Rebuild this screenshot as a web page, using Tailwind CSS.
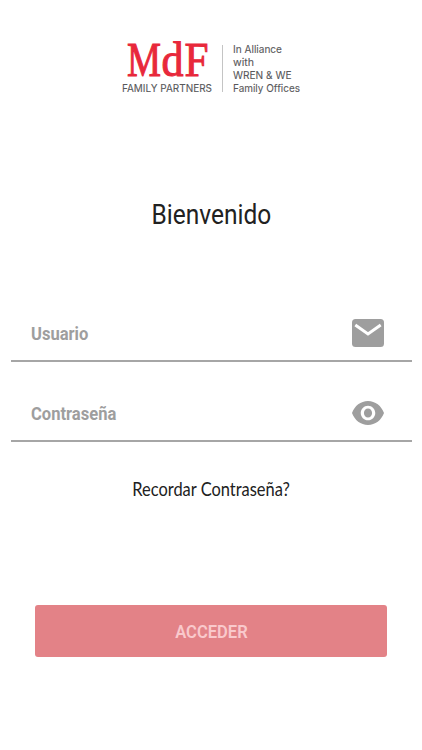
<!DOCTYPE html>
<html lang="es">
<head>
    <meta charset="UTF-8">
    <meta name="viewport" content="width=device-width, initial-scale=1.0">
    <title>MdF Family Partners</title>
    <script src="https://cdn.jsdelivr.net/npm/@tailwindcss/browser@4"></script>
</head>
<body class="bg-white min-h-screen font-[Roboto,sans-serif] text-[#212121]">
<main class="flex flex-col items-center w-full pt-6">
    <!-- Logo -->
    <svg class="w-[190px] h-[76px]" viewBox="116 24 190 76" role="img" aria-label="MdF Family Partners">
        <text y="75.5" font-family="Liberation Serif, serif" font-size="47.5" fill="#e8283b" stroke="#e8283b" stroke-width="1"><tspan x="127" textLength="34" lengthAdjust="spacingAndGlyphs">M</tspan><tspan x="161.5" textLength="22" lengthAdjust="spacingAndGlyphs">d</tspan><tspan x="184.5" textLength="24" lengthAdjust="spacingAndGlyphs">F</tspan></text>
        <g font-family="Inter, sans-serif" font-size="10.5" fill="#58585a" stroke="#58585a" stroke-width="0.1">
            <text x="122" y="92.3" textLength="90" lengthAdjust="spacingAndGlyphs">FAMILY PARTNERS</text>
            <text x="233" y="52.7" textLength="49" lengthAdjust="spacingAndGlyphs">In Alliance</text>
            <text x="233" y="66" textLength="21" lengthAdjust="spacingAndGlyphs">with</text>
            <text x="233" y="79.2" textLength="58.5" lengthAdjust="spacingAndGlyphs">WREN &amp; WE</text>
            <text x="233" y="92.3" textLength="67" lengthAdjust="spacingAndGlyphs">Family Offices</text>
        </g>
        <path d="M222.5 45v47" stroke="#c4c4c4" stroke-width="1"/>
    </svg>

    <h1 class="mt-[95px] h-10 leading-10 text-[28px] scale-x-[0.875]">Bienvenido</h1>

    <form class="w-full flex flex-col items-center">
        <div class="w-[401px] mt-[71px] h-[56px] flex items-center justify-between pl-[20px] pr-[28px] border-b-2 border-[#a6a6a6]">
            <input type="text" placeholder="Usuario" class="w-[280px] origin-left scale-x-[0.92] text-[18px] font-bold outline-none placeholder:text-[#9e9e9e]">
            <svg class="w-8 h-7" viewBox="0 0 32 28">
                <rect width="32" height="28" rx="3.5" fill="#9e9e9e"/>
                <path d="M3.3 6L16 15 28.7 6" fill="none" stroke="#fff" stroke-width="3"/>
            </svg>
        </div>
        <div class="w-[401px] mt-6 h-[56px] flex items-center justify-between pl-[20px] pr-[28px] border-b-2 border-[#a6a6a6]">
            <input type="password" placeholder="Contraseña" class="w-[280px] origin-left scale-x-[0.92] text-[18px] font-bold outline-none placeholder:text-[#9e9e9e]">
            <svg class="w-8 h-6" viewBox="1 4.5 22 15" preserveAspectRatio="none" fill="#9e9e9e">
                <path d="M12 4.5C7 4.5 2.73 7.61 1 12c1.73 4.39 6 7.5 11 7.5s9.27-3.11 11-7.5c-1.73-4.39-6-7.5-11-7.5zM12 16.6c-2.76 0-5-2.06-5-4.6s2.24-4.6 5-4.6 5 2.06 5 4.6-2.24 4.6-5 4.6zm0-7.4c-1.55 0-2.8 1.25-2.8 2.8s1.25 2.8 2.8 2.8 2.8-1.25 2.8-2.8-1.25-2.8-2.8-2.8z"/>
            </svg>
        </div>

        <a href="#" class="mt-[31px] h-8 leading-8 font-[Lato,sans-serif] text-[19px] scale-x-[0.865]">Recordar Contraseña?</a>

        <button type="button" class="mt-[100px] w-[352px] h-[52px] rounded-[3px] bg-[#e38287] text-[#f9c9cc] text-[18px] font-semibold">
            <span class="inline-block scale-x-[0.92]">ACCEDER</span>
        </button>
    </form>
</main>
</body>
</html>
